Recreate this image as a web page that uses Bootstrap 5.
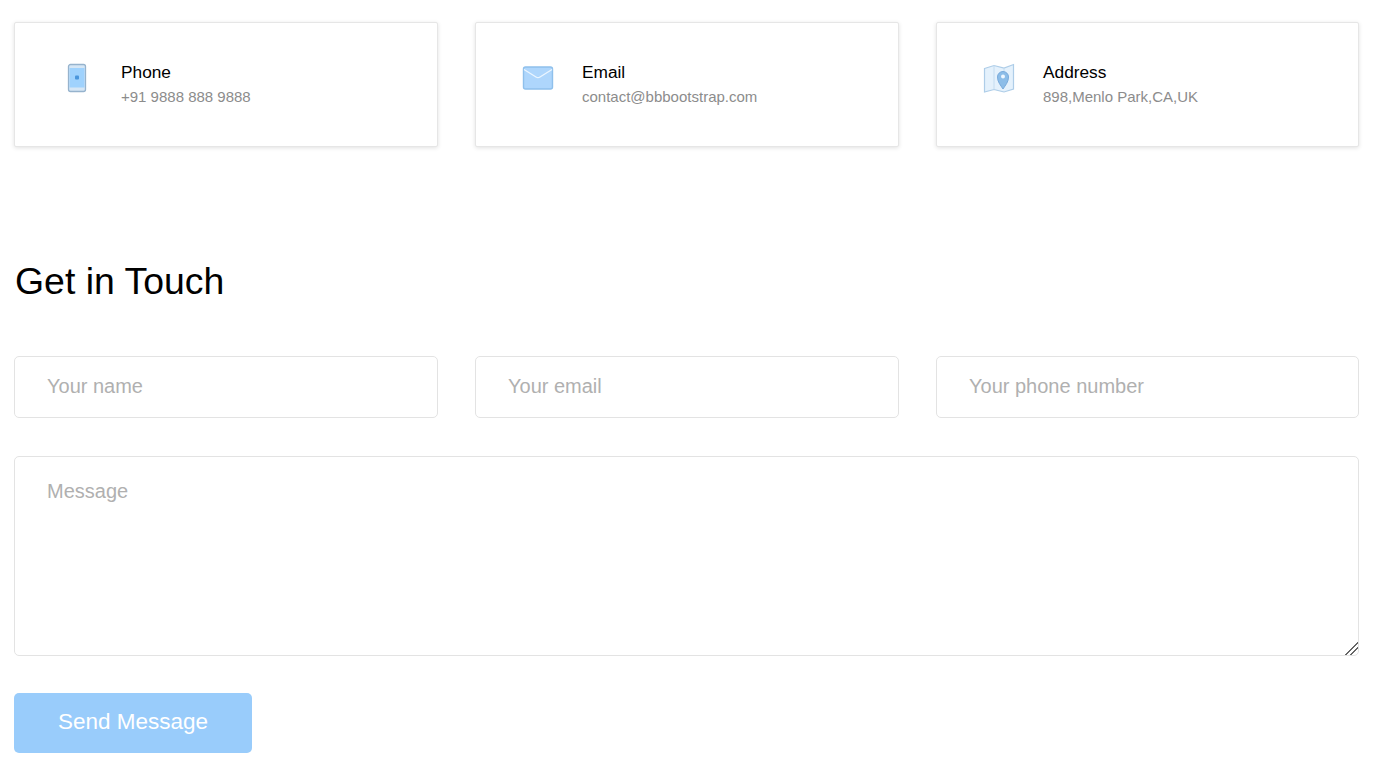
<!DOCTYPE html>
<html>
<head>
  <meta charset="utf-8">
  <title>Contact</title>
  <link href="https://cdn.jsdelivr.net/npm/bootstrap@5.3.0/dist/css/bootstrap.min.css" rel="stylesheet">
  <style>
    body { font-family: "Liberation Sans", Arial, sans-serif; background: #fff; color: #000; }
    .page-wrap { padding: 22px 23px 19px 14px; }
    .three-cols { display: grid; grid-template-columns: 424px 424px 423px; column-gap: 37px; }
    .info-box { height: 125px; border: 1px solid #e6e6e6; border-radius: 2px; box-shadow: 0 1px 4px rgba(0,0,0,.12); padding: 39px 0 0 45px; }
    .info-icon { width: 34px; height: 34px; margin-right: 27px; flex-shrink: 0; }
    .info-title { font-size: 17.3px; line-height: 20px; }
    .info-text { font-size: 15px; line-height: 20px; margin-top: 5px; color: #8c8c8c; }
    .touch-title { font-size: 37.4px; line-height: 44px; font-weight: 400; margin: 112px 0 53px 1px; }
    .form-control.touch-input { height: 62px; border: 1px solid #e3e3e3; border-radius: 5px; padding: 0 32px 2px; font-size: 20px; box-shadow: none; }
    .form-control.touch-area { display: block; height: 200px; margin-top: 38px; border: 1px solid #e3e3e3; border-radius: 5px; padding: 21px 32px; font-size: 20px; line-height: 26px; box-shadow: none; }
    .touch-area::-webkit-resizer { background: linear-gradient(135deg, transparent 54%, #666 54%, #666 61%, transparent 61%, transparent 71%, #666 71%, #666 78%, transparent 78%); }
    .touch-input::placeholder, .touch-area::placeholder { color: #b0b0b0; opacity: 1; }
    .btn.send-btn { display: block; width: 238px; height: 60px; margin-top: 37px; background: #99ccfb; border: 0; border-radius: 5px; color: #fff; font-size: 22.5px; padding: 0 0 2px; opacity: 1; }
  </style>
</head>
<body>
<div class="page-wrap">
  <div class="three-cols">
    <div class="info-box bg-white d-flex align-items-start">
      <svg class="info-icon" viewBox="0 0 34 34">
        <rect x="8.500" y="2.500" width="17" height="27" rx="2" fill="#d5e6f5" stroke="#96b3cd" stroke-width="1.300"/>
        <rect x="9.500" y="6" width="15" height="19.500" fill="#9fd2fd"/>
        <rect x="15" y="13.500" width="4" height="4" rx="1" fill="#4a96dc"/>
      </svg>
      <div>
        <div class="info-title">Phone</div>
        <div class="info-text">+91 9888 888 9888</div>
      </div>
    </div>
    <div class="info-box bg-white d-flex align-items-start">
      <svg class="info-icon" viewBox="0 0 34 34">
        <rect x="2.500" y="5" width="29" height="22" rx="2" fill="#aed6fc" stroke="#8fc0ec" stroke-width="1.400"/>
        <path d="M3 7.500 L15 15 Q17 16.300 19 15 L31 7.500" fill="none" stroke="#eaf5ff" stroke-width="1.400"/>
      </svg>
      <div>
        <div class="info-title">Email</div>
        <div class="info-text">contact@bbbootstrap.com</div>
      </div>
    </div>
    <div class="info-box bg-white d-flex align-items-start">
      <svg class="info-icon" viewBox="0 0 34 34">
        <path d="M2.500 6.500 L12 3.500 L22 6 L31.500 2.500 V27 L22 30 L12 27.500 L2.500 30 Z" fill="#e4f1fc" stroke="#aecde8" stroke-width="1.200"/>
        <path d="M12 3.500 V27.500 M22 6 V9" stroke="#c4dcf0" fill="none"/>
        <path d="M21 27 C18.500 23 15.500 20 15.500 15 A5.500 5.500 0 0 1 26.500 15 C26.500 20 23.500 23 21 27 Z" fill="#8cbde8" stroke="#78aadb"/>
        <circle cx="21" cy="14.500" r="2" fill="#eef7ff"/>
      </svg>
      <div>
        <div class="info-title">Address</div>
        <div class="info-text">898,Menlo Park,CA,UK</div>
      </div>
    </div>
  </div>

  <h2 class="touch-title">Get in Touch</h2>

  <form>
    <div class="three-cols">
      <input type="text" class="form-control touch-input" placeholder="Your name">
      <input type="email" class="form-control touch-input" placeholder="Your email">
      <input type="text" class="form-control touch-input" placeholder="Your phone number">
    </div>
    <textarea class="form-control touch-area" placeholder="Message"></textarea>
    <button type="button" class="btn send-btn">Send Message</button>
  </form>
</div>
<script src="https://cdn.jsdelivr.net/npm/bootstrap@5.3.0/dist/js/bootstrap.bundle.min.js"></script>
</body>
</html>
